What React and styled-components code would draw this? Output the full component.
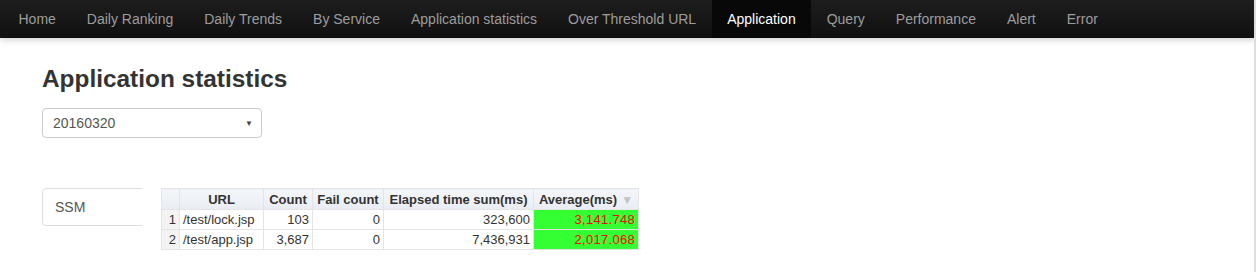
import React from "react";
import styled, { createGlobalStyle } from "styled-components";

const Global = createGlobalStyle`
  html, body { margin: 0; padding: 0; background: #fff; }
  body { font-family: "Liberation Sans", Arial, sans-serif; font-size: 14px; color: #333; }
`;

const Page = styled.div`
  width: 1256px;
  height: 272px;
  overflow: hidden;
  position: relative;
  border-right: 2px solid #ddd;
  box-sizing: border-box;
`;

const NavBar = styled.nav`
  height: 38px;
  display: flex;
  align-items: stretch;
  padding-left: 3px;
  background: linear-gradient(#1d1d1d, #101010);
  box-shadow: 0 2px 6px rgba(0, 0, 0, 0.18);
  margin-right: -2px;
`;

const NavItem = styled.a`
  display: flex;
  align-items: center;
  padding: 0 15.5px 1px;
  font-size: 14px;
  color: ${(p) => (p.$active ? "#fff" : "#9d9d9d")};
  background: ${(p) => (p.$active ? "#080808" : "transparent")};
  text-decoration: none;
  white-space: nowrap;
`;

const Content = styled.div`
  padding: 0 42px;
`;

const Title = styled.h2`
  margin: 24px 0 0;
  font-size: 24.4px;
  line-height: 34px;
  font-weight: bold;
  color: #333;
`;

const Select = styled.div`
  margin-top: 12px;
  width: 220px;
  height: 30px;
  box-sizing: border-box;
  border: 1px solid #ccc;
  border-radius: 4px;
  display: flex;
  align-items: center;
  justify-content: space-between;
  padding: 0 8px 0 10px;
  color: #555;
  font-size: 14px;
`;

const Arrow = styled.span`
  font-size: 8px;
  color: #444;
`;

const Row = styled.div`
  display: flex;
  align-items: flex-start;
  margin-top: 50px;
  gap: 19px;
`;

const TabClip = styled.div`
  width: 100px;
  overflow: hidden;
`;

const Tab = styled.div`
  width: 130px;
  height: 38px;
  box-sizing: border-box;
  border: 1px solid #ddd;
  border-radius: 4px;
  display: flex;
  align-items: center;
  padding-left: 12px;
  color: #555;
  font-size: 14px;
`;

const Grid = styled.table`
  border-collapse: collapse;
  table-layout: fixed;
  width: 477px;
  font-size: 13px;
  color: #333;
  border: 1px solid #e4e4e4;
`;

const Th = styled.th`
  height: 20px;
  padding: 0 3px;
  font-weight: bold;
  text-align: center;
  background: linear-gradient(#f4f6f9, #e9edf3);
  border: 1px solid #e4e4e4;
  border-top: none;
  white-space: nowrap;
  overflow: hidden;
`;

const Td = styled.td`
  height: 19px;
  padding: 0 3px;
  text-align: ${(p) => p.$align || "right"};
  border: 1px solid #e4e4e4;
  background: ${(p) => (p.$hot ? "#33ff33" : p.$num ? "#f3f3f3" : "#fff")};
  color: ${(p) => (p.$hot ? "#ff0000" : "#333")};
  letter-spacing: ${(p) => (p.$hot ? "0.3px" : "0")};
  white-space: nowrap;
`;

const Sort = styled.span`
  color: #c4c4c4;
  font-size: 12px;
  margin-left: 4px;
`;

const navItems = [
  "Home",
  "Daily Ranking",
  "Daily Trends",
  "By Service",
  "Application statistics",
  "Over Threshold URL",
  "Application",
  "Query",
  "Performance",
  "Alert",
  "Error",
];

const rows = [
  ["1", "/test/lock.jsp", "103", "0", "323,600", "3,141.748"],
  ["2", "/test/app.jsp", "3,687", "0", "7,436,931", "2,017.068"],
];

const colWidths = [18, 84, 49, 71, 150, 105];

export default function App() {
  return (
    <>
      <Global />
      <Page>
        <NavBar>
          {navItems.map((n) => (
            <NavItem key={n} $active={n === "Application"}>
              {n}
            </NavItem>
          ))}
        </NavBar>
        <Content>
          <Title>Application statistics</Title>
          <Select>
            <span>20160320</span>
            <Arrow>▼</Arrow>
          </Select>
          <Row>
            <TabClip>
              <Tab>SSM</Tab>
            </TabClip>
            <Grid>
              <colgroup>
                {colWidths.map((w, i) => (
                  <col key={i} style={{ width: w }} />
                ))}
              </colgroup>
              <thead>
                <tr>
                  <Th></Th>
                  <Th>URL</Th>
                  <Th>Count</Th>
                  <Th>Fail count</Th>
                  <Th>Elapsed time sum(ms)</Th>
                  <Th>
                    Average(ms)<Sort>▼</Sort>
                  </Th>
                </tr>
              </thead>
              <tbody>
                {rows.map((r) => (
                  <tr key={r[0]}>
                    <Td $num>{r[0]}</Td>
                    <Td $align="left">{r[1]}</Td>
                    <Td>{r[2]}</Td>
                    <Td>{r[3]}</Td>
                    <Td>{r[4]}</Td>
                    <Td $hot>{r[5]}</Td>
                  </tr>
                ))}
              </tbody>
            </Grid>
          </Row>
        </Content>
      </Page>
    </>
  );
}
